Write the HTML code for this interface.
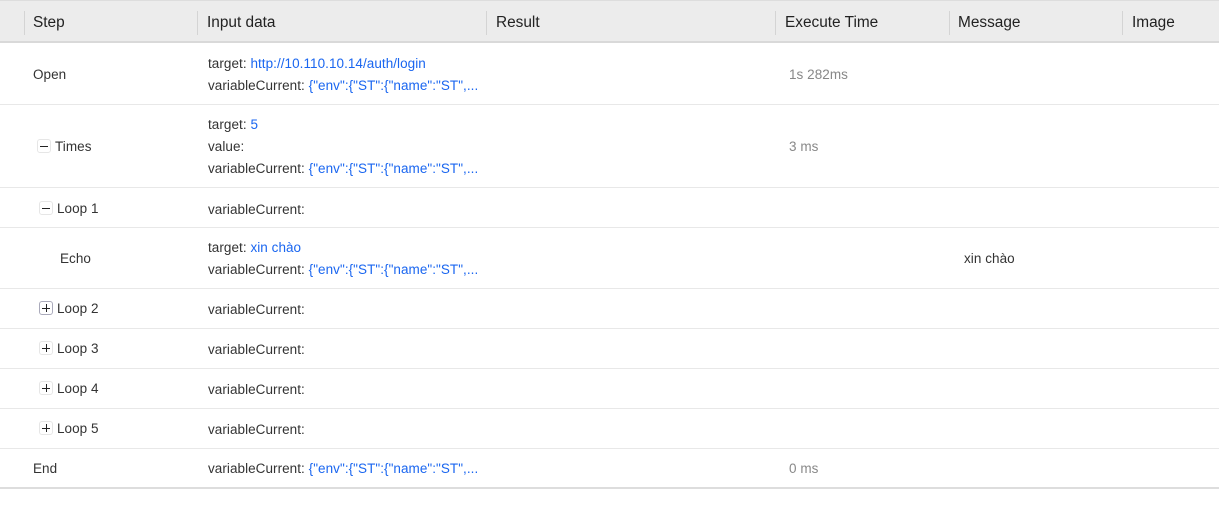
<!DOCTYPE html>
<html><head><meta charset="utf-8"><style>
body{margin:0;width:1219px;height:519px;background:#fff;font-family:"Liberation Sans",sans-serif;color:#333;position:relative;overflow:hidden}
.h{position:absolute;left:0;top:0;width:1219px;height:43px;background:#ececec;border-bottom:2px solid #d9d9d9;border-top:1px solid #ddd;box-sizing:border-box}
.ht{position:absolute;top:13px;font-size:15.4px;color:#222}
.d{position:absolute;top:10px;width:1px;height:24px;background:#d4d4d4}
.r{position:absolute;left:0;width:1219px;border-bottom:1px solid #e8e8e8}
.t{position:absolute;font-size:13.5px;line-height:22px;white-space:nowrap;letter-spacing:0.05px}
.b{color:#1a66f0}
.g{color:#888}
.ic{display:inline-block;width:14px;height:14px;border:1px solid #e6e6e6;border-radius:3px;box-sizing:border-box;position:relative;vertical-align:-2px;margin-right:4px;background:#fff}
.ic:before{content:"";position:absolute;left:2px;top:6px;width:8px;height:1px;background:#222}
.p:after{content:"";position:absolute;left:6px;top:2px;width:1px;height:8px;background:#222}
.f{border-color:#aab}
</style></head><body>
<div class="h">
<div class="d" style="left:24px"></div><div class="d" style="left:197px"></div><div class="d" style="left:486px"></div><div class="d" style="left:775px"></div><div class="d" style="left:949px"></div><div class="d" style="left:1122px"></div>
<div class="ht" style="left:33px">Step</div><div class="ht" style="left:207px">Input data</div><div class="ht" style="left:496px">Result</div><div class="ht" style="left:785px">Execute Time</div><div class="ht" style="left:958px">Message</div><div class="ht" style="left:1132px">Image</div>
</div>
<div class="r" style="top:44px;height:60px"></div>
<div class="t" style="left:33px;top:64px">Open</div>
<div class="t" style="left:208px;top:53px">target: <span class="b">http://10.110.10.14/auth/login</span><br>variableCurrent: <span class="b">{"env":{"ST":{"name":"ST",...</span></div>
<div class="t g" style="left:789px;top:64px">1s 282ms</div>

<div class="r" style="top:104px;height:83px"></div>
<div class="t" style="left:37px;top:136px"><span class="ic"></span>Times</div>
<div class="t" style="left:208px;top:114px">target: <span class="b">5</span><br>value:<br>variableCurrent: <span class="b">{"env":{"ST":{"name":"ST",...</span></div>
<div class="t g" style="left:789px;top:136px">3 ms</div>

<div class="r" style="top:187px;height:40px"></div>
<div class="t" style="left:39px;top:198px"><span class="ic"></span>Loop 1</div>
<div class="t" style="left:208px;top:199px">variableCurrent:</div>

<div class="r" style="top:227px;height:61px"></div>
<div class="t" style="left:60px;top:248px">Echo</div>
<div class="t" style="left:208px;top:237px">target: <span class="b">xin chào</span><br>variableCurrent: <span class="b">{"env":{"ST":{"name":"ST",...</span></div>
<div class="t" style="left:964px;top:248px">xin chào</div>

<div class="r" style="top:288px;height:40px"></div>
<div class="t" style="left:39px;top:298px"><span class="ic p f"></span>Loop 2</div>
<div class="t" style="left:208px;top:299px">variableCurrent:</div>
<div class="r" style="top:328px;height:40px"></div>
<div class="t" style="left:39px;top:338px"><span class="ic p"></span>Loop 3</div>
<div class="t" style="left:208px;top:339px">variableCurrent:</div>
<div class="r" style="top:368px;height:40px"></div>
<div class="t" style="left:39px;top:378px"><span class="ic p"></span>Loop 4</div>
<div class="t" style="left:208px;top:379px">variableCurrent:</div>
<div class="r" style="top:408px;height:40px"></div>
<div class="t" style="left:39px;top:418px"><span class="ic p"></span>Loop 5</div>
<div class="t" style="left:208px;top:419px">variableCurrent:</div>

<div class="r" style="top:448px;height:39px;border-bottom:2px solid #ddd"></div>
<div class="t" style="left:33px;top:458px">End</div>
<div class="t" style="left:208px;top:458px">variableCurrent: <span class="b">{"env":{"ST":{"name":"ST",...</span></div>
<div class="t g" style="left:789px;top:458px">0 ms</div>
</body></html>
